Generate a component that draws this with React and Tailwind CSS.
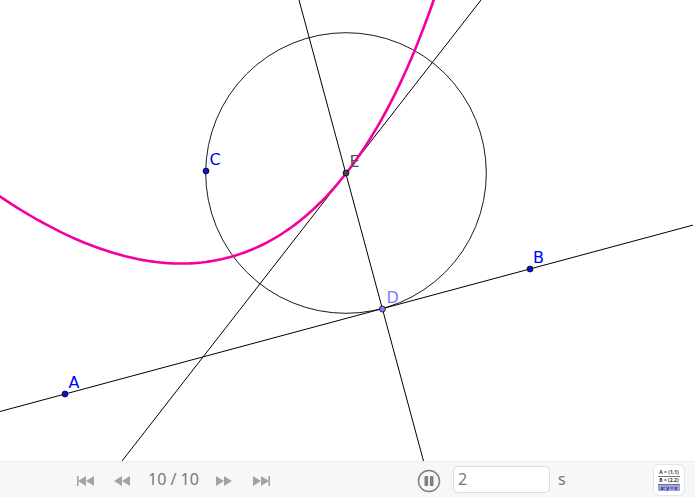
const A = [65, 394];
const B = [530, 269];
const C = [206, 171];
const E = [346, 173];
const D = [382.4, 309];

// parabola with focus C and directrix AB
function parabolaPath() {
  const len = Math.hypot(B[0] - A[0], B[1] - A[1]);
  const u = [(B[0] - A[0]) / len, (B[1] - A[1]) / len];
  const n = [u[1], -u[0]];
  const fx = (C[0] - A[0]) * u[0] + (C[1] - A[1]) * u[1];
  const p = (C[0] - A[0]) * n[0] + (C[1] - A[1]) * n[1];
  const pts = [];
  for (let t = -340; t <= 340; t += 4) {
    const h = (t * t + p * p) / (2 * p);
    const x = A[0] + (fx + t) * u[0] + h * n[0];
    const y = A[1] + (fx + t) * u[1] + h * n[1];
    pts.push(`${x.toFixed(1)},${y.toFixed(1)}`);
  }
  return "M" + pts.join("L");
}

function Point({ at, fill }) {
  return <circle cx={at[0]} cy={at[1]} r="3" fill={fill} stroke="#000" strokeWidth="0.7" />;
}

function Label({ x, y, fill, children }) {
  return (
    <text x={x} y={y} fill={fill} fontSize="16" fontFamily="'DejaVu Sans', sans-serif">
      {children}
    </text>
  );
}

function Board() {
  return (
    <svg width="695" height="461" viewBox="0 0 695 461" className="block">
      <circle cx={E[0]} cy={E[1]} r="140.3" fill="none" stroke="#000" strokeWidth="0.9" />
      <line x1="0" y1="411.5" x2="693" y2="225.1" stroke="#000" strokeWidth="1" />
      <line x1="299" y1="0" x2="423.5" y2="461" stroke="#000" strokeWidth="1" />
      <line x1="481" y1="0" x2="122" y2="461" stroke="#000" strokeWidth="1" />
      <path d={parabolaPath()} fill="none" stroke="#f500a0" strokeWidth="2.6" />
      <Point at={A} fill="#0c0cd8" />
      <Point at={B} fill="#0c0cd8" />
      <Point at={C} fill="#0c0cd8" />
      <Point at={D} fill="#7d7dff" />
      <Point at={E} fill="#444444" />
      <Label x="68.5" y="388" fill="#0000ff">A</Label>
      <Label x="533" y="263" fill="#0000ff">B</Label>
      <Label x="209.5" y="165" fill="#0000ff">C</Label>
      <Label x="386.5" y="303" fill="#7d7dff">D</Label>
      <Label x="349.5" y="167" fill="#555555">E</Label>
    </svg>
  );
}

function StepIcon({ dir, bar }) {
  return (
    <svg width="17" height="12" viewBox="0 0 17 12" className={dir === "back" ? "shrink-0" : "shrink-0 rotate-180"}>
      {bar && <rect x="0" y="1" width="1.6" height="10" fill="#a3a3a3" />}
      <path d="M1 6 9 1V11Z M9 6 17 1V11Z" fill="#a3a3a3" />
    </svg>
  );
}

function AlgebraThumb() {
  return (
    <button className="mb-[2px] ml-[85px] flex h-[32px] w-[32px] shrink-0 flex-col items-center justify-center rounded-[6px] border border-[#e4e4e4] bg-white">
      <div className="w-[22px] border-b border-[#777] text-center text-[5px] leading-[7px] font-bold text-[#333]">A = (1,1)</div>
      <div className="w-[22px] border-b border-[#777] text-center text-[5px] leading-[7px] font-bold text-[#333]">B = (2,2)</div>
      <div className="w-[22px] bg-[#a0a0f0] text-center text-[5px] leading-[6px] font-bold text-[#333]">a: y = x</div>
    </button>
  );
}

export default function App() {
  return (
    <div className="h-[498px] w-[695px] overflow-hidden bg-white font-['Noto_Sans',sans-serif]">
      <Board />
      <div className="flex h-[36px] items-center border-t border-[#ececec] bg-[#f7f7f7] pt-[3px] pl-[77px]">
        <StepIcon dir="back" bar />
        <div className="ml-[19px] shrink-0">
          <StepIcon dir="back" />
        </div>
        <span className="mb-[4px] ml-[18px] w-[51px] shrink-0 text-base whitespace-nowrap text-[#777]">10 / 10</span>
        <div className="ml-[17px] shrink-0">
          <StepIcon dir="next" />
        </div>
        <div className="ml-[20px] shrink-0">
          <StepIcon dir="next" bar />
        </div>
        <svg width="24" height="24" viewBox="0 0 24 24" className="ml-[147px] shrink-0">
          <circle cx="12" cy="12" r="10.5" fill="#f7f7f7" stroke="#808080" strokeWidth="1.5" />
          <rect x="7.5" y="7" width="3.6" height="10" rx="0.8" fill="#808080" />
          <rect x="12.9" y="7" width="3.6" height="10" rx="0.8" fill="#808080" />
        </svg>
        <div className="mb-[4px] ml-[12px] flex h-[27px] w-[97px] shrink-0 items-center rounded-[5px] border border-[#dcdcdc] bg-white pl-[4px] text-base text-[#777]">
          2
        </div>
        <span className="mb-[4px] ml-[8px] w-[10px] shrink-0 text-base text-[#777]">s</span>
        <AlgebraThumb />
      </div>
    </div>
  );
}
